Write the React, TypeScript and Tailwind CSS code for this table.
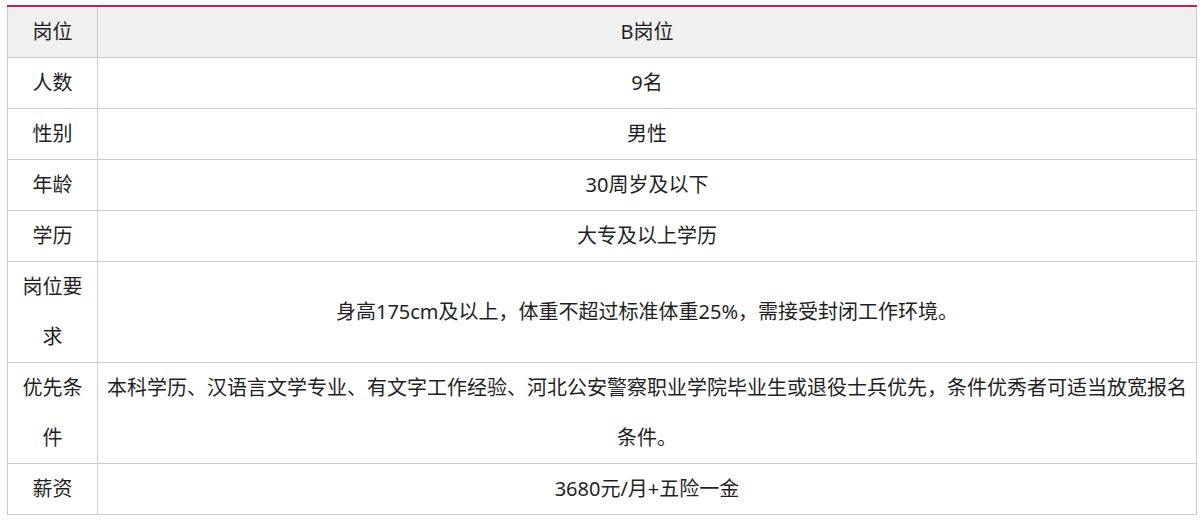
import React from "react";

const rows: { label: string; value: string; head?: boolean }[] = [
  { label: "岗位", value: "B岗位", head: true },
  { label: "人数", value: "9名" },
  { label: "性别", value: "男性" },
  { label: "年龄", value: "30周岁及以下" },
  { label: "学历", value: "大专及以上学历" },
  { label: "岗位要求", value: "身高175cm及以上，体重不超过标准体重25%，需接受封闭工作环境。" },
  {
    label: "优先条件",
    value:
      "本科学历、汉语言文学专业、有文字工作经验、河北公安警察职业学院毕业生或退役士兵优先，条件优秀者可适当放宽报名条件。",
  },
  { label: "薪资", value: "3680元/月+五险一金" },
];

export default function App() {
  return (
    <div
      className="bg-white w-[1204px] h-[520px] pt-[5px] pl-[7px] text-[#1f1f1f]"
      style={{ fontFamily: '"Noto Sans", "Noto Sans CJK SC", sans-serif' }}
    >
      <div className="w-[1190px] border-t-2 border-[#c51f5d]">
        <div className="border-l border-r border-[#cccccc]">
          {rows.map((r, i) => (
            <div
              key={i}
              className={`flex border-b border-[#cccccc] text-[20px] leading-[50px] ${r.head ? "bg-[#f0f0f0]" : "bg-white"}`}
            >
              <div className="w-[90px] shrink-0 border-r border-[#cccccc] px-[9px] text-center flex items-center justify-center break-all">
                {r.label}
              </div>
              <div className="flex-1 px-[9px] text-center flex items-center justify-center">
                <span>{r.value}</span>
              </div>
            </div>
          ))}
        </div>
      </div>
    </div>
  );
}
